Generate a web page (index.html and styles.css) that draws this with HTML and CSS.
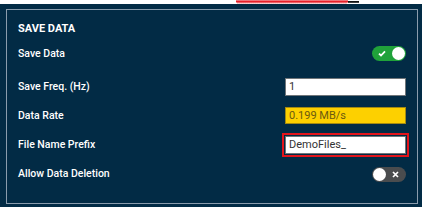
FILE: index.html
```html
<!DOCTYPE html>
<html lang="en">
<head>
  <meta charset="UTF-8">
  <title>Save Data</title>
  <link rel="stylesheet" href="styles.css">
</head>
<body>
  <div class="topline">
    <svg width="124" height="4" viewBox="0 0 124 4">
      <polyline points="0,2.6 1,0.6 2,2.6 3,0.6 4,2.6 5,0.6 6,2.6 7,0.6 8,2.6 9,0.6 10,2.6 11,0.6 12,2.6 13,0.6 14,2.6 15,0.6 16,2.6 17,0.6 18,2.6 19,0.6 20,2.6 21,0.6 22,2.6 23,0.6 24,2.6 25,0.6 26,2.6 27,0.6 28,2.6 29,0.6 30,2.6 31,0.6 32,2.6 33,0.6 34,2.6 35,0.6 36,2.6 37,0.6 38,2.6 39,0.6 40,2.6 41,0.6 42,2.6 43,0.6 44,2.6 45,0.6 46,2.6 47,0.6 48,2.6 49,0.6 50,2.6 51,0.6 52,2.6 53,0.6 54,2.6 55,0.6 56,2.6 57,0.6 58,2.6 59,0.6 60,2.6 61,0.6 62,2.6 63,0.6 64,2.6 65,0.6 66,2.6 67,0.6 68,2.6 69,0.6 70,2.6 71,0.6 72,2.6 73,0.6 74,2.6 75,0.6 76,2.6 77,0.6 78,2.6 79,0.6 80,2.6 81,0.6 82,2.6 83,0.6 84,2.6 85,0.6 86,2.6 87,0.6 88,2.6 89,0.6 90,2.6 91,0.6 92,2.6 93,0.6 94,2.6 95,0.6 96,2.6 97,0.6 98,2.6 99,0.6 100,2.6 101,0.6 102,2.6 103,0.6 104,2.6 105,0.6 106,2.6 107,0.6 108,2.6 109,0.6 110,2.6 111,0.6 112,2.6" fill="none" stroke="#e8202a" stroke-width="1.2"/>
      <rect x="112" y="1" width="11" height="1.8" fill="#111"/>
    </svg>
  </div>

  <div class="frame">
    <div class="panel">
      <div class="title">SAVE DATA</div>

      <div class="rows">
        <div class="row first">
          <span class="label">Save Data</span>
          <span class="toggle on">
            <svg class="mark" width="8" height="7" viewBox="0 0 8 7">
              <path d="M1 3.6 L3 5.5 L7 1.3" fill="none" stroke="#fff" stroke-width="1.8"/>
            </svg>
            <span class="knob"></span>
          </span>
        </div>

        <div class="row">
          <span class="label">Save Freq. (Hz)</span>
          <input class="field" type="text" value="1">
        </div>

        <div class="row">
          <span class="label">Data Rate</span>
          <span class="field rate">0.199 MB/s</span>
        </div>

        <div class="row">
          <span class="label">File Name Prefix</span>
          <input class="field marked" type="text" value="DemoFiles_">
        </div>

        <div class="row">
          <span class="label">Allow Data Deletion</span>
          <span class="toggle off">
            <span class="knob"></span>
            <svg class="mark" width="7" height="7" viewBox="0 0 7 7">
              <path d="M1 1 L6 6 M6 1 L1 6" fill="none" stroke="#fff" stroke-width="1.7"/>
            </svg>
          </span>
        </div>
      </div>
    </div>
  </div>
</body>
</html>
```

FILE: styles.css
```css
body {
  margin: 0;
  background: #fff;
  font-family: Roboto, "Liberation Sans", sans-serif;
  color: #fff;
}
.topline {
  height: 4px;
  padding-left: 236px;
}
.topline svg {
  display: block;
}
.frame {
  width: 422px;
  height: 203px;
  box-sizing: border-box;
  padding: 5px 4px 3px 6px;
  background: #022b45;
}
.panel {
  height: 195px;
  box-sizing: border-box;
  border: 1px solid #8a9cad;
  padding: 0 11px;
}
.title {
  padding-top: 12px;
  line-height: 13px;
  font-size: 11px;
  font-weight: 700;
}
.rows {
  margin-top: 4px;
}
.row {
  height: 29px;
  display: flex;
  align-items: center;
  justify-content: space-between;
}
.row.first {
  margin-bottom: 4px;
}
.label {
  font-size: 10.5px;
  font-weight: 500;
}
.field {
  width: 121px;
  height: 18px;
  box-sizing: border-box;
  margin: 0;
  border: 1px solid #6f7579;
  padding: 0 3px;
  background: #fff;
  font-family: Roboto, "Liberation Sans", sans-serif;
  font-size: 11px;
  color: #333;
  outline: none;
}
.field.rate {
  height: 17px;
  line-height: 15px;
  margin-top: -1px;
  display: block;
  background: #fdd000;
  border-color: #a48a10;
  color: #6b5a10;
}
.field.marked {
  outline: 2px solid #e3141b;
  outline-offset: 1px;
}
.toggle {
  width: 34px;
  height: 15px;
  box-sizing: border-box;
  border-radius: 8px;
  padding: 1px;
  display: flex;
  align-items: center;
  justify-content: space-between;
}
.toggle.on {
  background: #20a23a;
  padding-left: 6px;
}
.toggle.off {
  background: #4a4c4e;
  padding-right: 7px;
  margin-top: 1px;
}
.knob {
  width: 13px;
  height: 13px;
  border-radius: 50%;
  background: #fff;
}
.mark {
  display: block;
}
```
